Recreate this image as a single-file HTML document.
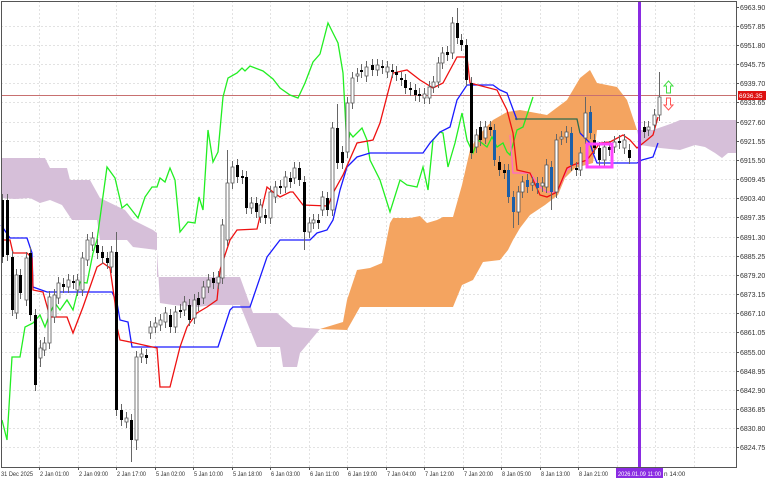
<!DOCTYPE html>
<html><head><meta charset="utf-8"><style>
html,body{margin:0;padding:0;background:#fff;width:768px;height:480px;overflow:hidden}
svg{position:absolute;left:0;top:0}
text{font-family:"Liberation Sans",sans-serif;font-size:7px;fill:#333}
.b text{font-size:6.4px}
</style></head><body>
<svg width="768" height="480" viewBox="0 0 768 480" xmlns="http://www.w3.org/2000/svg">
<g stroke="#e2e2e2" stroke-width="1" stroke-dasharray="2,2" fill="none">
<path d="M39.5 1V467M78.5 1V467M116.5 1V467M155.5 1V467M193.5 1V467M232.5 1V467M270.5 1V467M309.5 1V467M347.5 1V467M386.5 1V467M424.5 1V467M463.5 1V467M501.5 1V467M540.5 1V467M578.5 1V467M617.5 1V467M655.5 1V467M694.5 1V467"/>
<path d="M1 26.5H736M1 45.5H736M1 64.5H736M1 83.5H736M1 102.5H736M1 122.5H736M1 141.5H736M1 160.5H736M1 179.5H736M1 198.5H736M1 217.5H736M1 237.5H736M1 256.5H736M1 275.5H736M1 294.5H736M1 313.5H736M1 332.5H736M1 352.5H736M1 371.5H736M1 390.5H736M1 409.5H736M1 428.5H736M1 447.5H736"/>
</g>
<path fill="#d6bfd9" d="M1 158H45L50 168H67L70 180H90L100 198L125 210L133 220L153 230L157 233L157 277H240L253 313H277L293 327L320 329L300 353L297 367H283L280 347H257L240 305H213L197 307L173 305L160 303L157 250L133 247L127 240H100L97 220H72L62 205L50 200L40 203L30 198L15 199L1 198Z"/>
<path fill="#d6bfd9" d="M637 130L653 130L673 123L680 120H736V153L728 153L722 158L715 153L705 147L695 145L680 150L660 148L640 145Z"/>
<path fill="#f4a460" d="M320 329L343 322L347 300L357 270L370 268L382 263L390 223L393 218L410 218L420 216L427 223L437 220L443 217L453 217L462 185L470 150L477 137L493 120L507 112L520 110L547 115L567 100L580 78L590 70L597 83L617 87L627 100L637 130H597L593 163L575 168L565 178L558 195L545 205L530 215L520 228L513 240L508 250L500 260L483 262L473 280L462 285L453 307H360L347 330Z"/>
<path d="M1 95.5H736" stroke="#c87070" stroke-width="1"/>
<polyline fill="none" stroke="#22ee22" stroke-width="1.3" points="2,420 7,440 12,357 20,357 25,327 33,323 40,315 45,327 50,313 55,303 60,310 67,300 73,310 80,282 87,283 93,253 97,240 107,167 115,178 122,208 127,204 138,218 145,197 152,187 157,187 160,178 165,182 170,168 175,180 180,232 188,222 195,223 199,197 203,210 208,130 213,162 218,152 223,97 228,78 237,73 242,68 245,71 250,66 263,71 273,79 280,88 290,95 298,98 305,83 313,62 320,54 328,23 333,33 338,43 343,73 347,148 350,133 353,137 362,128 367,140 370,160 380,180 390,212 400,180 407,185 417,187 423,167 428,190 433,140 440,132 443,133 448,167 455,143 462,113 467,140 473,153 478,140 487,147 492,137 497,147 503,143 507,152 510,155 517,130 523,127 533,97"/>
<polyline fill="none" stroke="#1a1aff" stroke-width="1.3" points="1,225 10,238 27,238 32,253 33,287 47,292 112,292 117,303 120,320 128,322 132,347 218,347 230,310 233,307 250,307 267,257 280,240 310,240 317,233 327,230 333,220 340,190 347,167 357,157 370,153 423,153 430,143 440,132 450,127 457,100 467,85 493,85 500,90 507,93 517,120"/>
<polyline fill="none" stroke="#2e6b4e" stroke-width="1.3" points="515,119 577,119 580,133"/>
<polyline fill="none" stroke="#1a1aff" stroke-width="1.3" points="580,133 590,143 593,153 597,163 637,163 642,160 653,157 658,143"/>
<polyline fill="none" stroke="#ff66cc" stroke-width="1.3" points="510,135 513,173 530,173 540,187 547,192 557,192 567,170 573,165 583,163"/>
<polyline fill="none" stroke="#ee1111" stroke-width="1.3" points="1,240 10,240 13,253 27,253 32,258 33,290 43,292 50,317 67,317 73,333 83,307 97,267 103,263 110,268 115,303 117,327 120,340 130,342 157,348 160,387 170,387 180,347 187,327 197,313 207,307 217,300 220,270 230,240 237,230 257,229 267,187 273,192 280,197 290,192 293,192 303,205 328,206 333,193 343,175 357,143 373,140 380,123 393,73 407,70 420,80 433,88 443,83 457,57 467,57 470,83 497,90 507,110 513,133 517,170 530,173 540,195 547,197 557,192 567,168 573,165 587,160 600,143 610,142 623,135 630,140 637,148 647,140 653,135 658,117"/>
<path stroke="#666" stroke-width="1" fill="none" d="M2.5 194V263M7.5 194V261M12.5 251V316M16.5 269V319M20.5 269V299M26.5 252V306M30.5 247V321M35.5 309V391M40.5 340V367M44.5 337V356M49.5 291V349M54.5 289V323M58.5 277V304M63.5 278V293M68.5 274V293M73.5 275V289M77.5 274V296M82.5 252V296M87.5 234V266M92.5 232V251M97.5 239V259M102.5 246V264M107.5 252V269M111.5 246V273M116.5 232V416M121.5 404V426M126.5 412V428M131.5 414V462M136.5 351V450M141.5 348V363M146.5 349V364M150.5 321V339M155.5 317V333M160.5 314V331M165.5 307V328M170.5 309V333M175.5 306V333M180.5 304V318M184.5 296V316M189.5 299V326M194.5 294V324M198.5 292V311M203.5 281V304M208.5 274V293M213.5 272V289M218.5 271V289M222.5 219V284M227.5 150V246M232.5 161V189M237.5 159V183M242.5 170V184M246.5 171V214M251.5 197V214M256.5 197V218M260.5 199V223M265.5 209V224M270.5 186V224M275.5 181V203M280.5 180V194M285.5 171V193M290.5 172V188M294.5 162V184M299.5 162V186M304.5 176V250M309.5 217V238M313.5 214V229M318.5 214V229M322.5 191V216M327.5 192V216M332.5 122V216M337.5 104V169M342.5 146V169M347.5 97V158M352.5 72V109M357.5 68V82M361.5 64V78M366.5 61V82M372.5 59V76M377.5 59V76M382.5 60V74M387.5 61V78M392.5 64V78M396.5 66V81M401.5 72V86M405.5 74V94M410.5 82V96M415.5 84V101M419.5 88V102M424.5 88V104M429.5 81V104M433.5 76V93M438.5 57V88M442.5 47V69M447.5 46V61M452.5 17V59M457.5 8V44M461.5 34V51M466.5 39V86M471.5 77V159M476.5 129V153M480.5 121V146M485.5 121V144M490.5 121V136M494.5 124V166M499.5 156V176M504.5 164V179M508.5 164V203M513.5 191V228M518.5 186V225M522.5 176V198M527.5 174V193M532.5 177V191M537.5 177V194M542.5 177V192M546.5 159V193M551.5 161V210M556.5 134V198M561.5 131V145M566.5 126V143M571.5 127V171M576.5 162V176M580.5 147V176M585.5 97V144M590.5 106V139M594.5 134V154M599.5 142V166M604.5 141V166M609.5 141V156M614.5 136V153M619.5 135V149M624.5 134V154M629.5 144V164M644.5 121V138M648.5 121V136M654.5 109V131M659.5 72V121"/>
<path fill="#000" d="M1 200h3V257h-3ZM6 200h3V255h-3ZM11 257h3V310h-3ZM19 275h3V293h-3ZM29 253h3V315h-3ZM34 315h3V385h-3ZM62 284h3V287h-3ZM72 281h3V283h-3ZM96 245h3V253h-3ZM101 252h3V258h-3ZM106 258h3V263h-3ZM115 252h3V410h-3ZM120 410h3V420h-3ZM130 420h3V440h-3ZM145 355h3V358h-3ZM169 315h3V327h-3ZM179 310h3V312h-3ZM188 305h3V320h-3ZM197 298h3V305h-3ZM212 278h3V283h-3ZM236 165h3V177h-3ZM241 176h3V178h-3ZM245 177h3V208h-3ZM255 203h3V212h-3ZM264 215h3V218h-3ZM279 186h3V188h-3ZM289 178h3V182h-3ZM298 168h3V180h-3ZM303 182h3V232h-3ZM317 220h3V223h-3ZM326 198h3V210h-3ZM336 128h3V163h-3ZM341 152h3V163h-3ZM360 70h3V72h-3ZM371 65h3V70h-3ZM381 66h3V68h-3ZM391 70h3V72h-3ZM395 72h3V75h-3ZM400 78h3V80h-3ZM404 80h3V88h-3ZM409 88h3V90h-3ZM414 90h3V95h-3ZM418 94h3V96h-3ZM446 52h3V55h-3ZM456 23h3V38h-3ZM460 40h3V45h-3ZM465 45h3V80h-3ZM470 83h3V153h-3ZM479 127h3V140h-3ZM489 127h3V130h-3ZM498 162h3V170h-3ZM503 170h3V173h-3ZM575 168h3V170h-3ZM593 140h3V148h-3ZM598 148h3V160h-3ZM608 147h3V150h-3ZM618 141h3V143h-3ZM628 150h3V158h-3ZM643 127h3V132h-3Z"/>
<path fill="#1c5fa8" d="M493 130h3V160h-3ZM507 170h3V197h-3ZM512 197h3V212h-3ZM526 180h3V187h-3ZM536 183h3V188h-3ZM550 167h3V192h-3ZM570 133h3V165h-3ZM589 112h3V133h-3Z"/>
<path fill="#fff" stroke="#555" stroke-width="0.8" d="M15 275h3V313h-3ZM25 258h3V300h-3ZM39 348h3V358h-3ZM43 343h3V350h-3ZM48 297h3V343h-3ZM53 295h3V317h-3ZM57 283h3V298h-3ZM67 280h3V287h-3ZM76 280h3V290h-3ZM81 258h3V290h-3ZM86 240h3V260h-3ZM91 238h3V245h-3ZM110 252h3V267h-3ZM125 418h3V422h-3ZM135 357h3V440h-3ZM140 354h3V357h-3ZM149 327h3V333h-3ZM154 323h3V327h-3ZM159 320h3V325h-3ZM164 313h3V322h-3ZM174 312h3V327h-3ZM183 302h3V310h-3ZM193 300h3V318h-3ZM202 287h3V298h-3ZM207 280h3V287h-3ZM217 277h3V283h-3ZM221 225h3V278h-3ZM226 183h3V240h-3ZM231 167h3V183h-3ZM250 203h3V208h-3ZM259 205h3V217h-3ZM269 192h3V218h-3ZM274 187h3V197h-3ZM284 177h3V187h-3ZM293 168h3V178h-3ZM308 223h3V232h-3ZM312 220h3V223h-3ZM321 197h3V210h-3ZM331 128h3V210h-3ZM346 103h3V152h-3ZM351 78h3V103h-3ZM356 74h3V76h-3ZM365 67h3V76h-3ZM376 65h3V70h-3ZM386 67h3V72h-3ZM423 94h3V98h-3ZM428 87h3V98h-3ZM432 82h3V87h-3ZM437 63h3V82h-3ZM441 53h3V63h-3ZM451 23h3V53h-3ZM475 135h3V147h-3ZM484 127h3V138h-3ZM517 192h3V212h-3ZM521 182h3V192h-3ZM531 183h3V185h-3ZM541 183h3V186h-3ZM545 165h3V187h-3ZM555 140h3V192h-3ZM560 137h3V139h-3ZM565 132h3V137h-3ZM579 153h3V170h-3ZM584 113h3V138h-3ZM603 147h3V160h-3ZM613 142h3V147h-3ZM623 140h3V148h-3ZM647 127h3V130h-3ZM653 115h3V125h-3ZM658 97h3V115h-3Z"/>
<rect x="587" y="144" width="25" height="23" fill="none" stroke="#ff44ff" stroke-width="3"/>
<path d="M668.5 81L673 86H670.5V93H666.5V86H664Z" fill="#fff" stroke="#44dd44" stroke-width="1"/>
<path d="M668.5 110L673 105H670.5V98H666.5V105H664Z" fill="#fff" stroke="#ff5555" stroke-width="1"/>
<rect x="638" y="1" width="3" height="466" fill="#8a2be2"/>
<path d="M1.5 1V467.5H736.5V1.5H1" stroke="#555" stroke-width="1" fill="none"/>
<path stroke="#555" d="M736 7.5h3M736 26.5h3M736 45.5h3M736 64.5h3M736 83.5h3M736 102.5h3M736 122.5h3M736 141.5h3M736 160.5h3M736 179.5h3M736 198.5h3M736 217.5h3M736 237.5h3M736 256.5h3M736 275.5h3M736 294.5h3M736 313.5h3M736 332.5h3M736 352.5h3M736 371.5h3M736 390.5h3M736 409.5h3M736 428.5h3M736 447.5h3M39.5 467v3M78.5 467v3M116.5 467v3M155.5 467v3M193.5 467v3M232.5 467v3M270.5 467v3M309.5 467v3M347.5 467v3M386.5 467v3M424.5 467v3M463.5 467v3M501.5 467v3M540.5 467v3M578.5 467v3"/>
<g>
<text x="740" y="10">6963.90</text><text x="740" y="29">6957.85</text><text x="740" y="48">6951.80</text><text x="740" y="67">6945.75</text><text x="740" y="86">6939.70</text><text x="740" y="105">6933.65</text><text x="740" y="125">6927.60</text><text x="740" y="144">6921.55</text><text x="740" y="163">6915.50</text><text x="740" y="182">6909.45</text><text x="740" y="201">6903.40</text><text x="740" y="220">6897.35</text><text x="740" y="240">6891.30</text><text x="740" y="259">6885.25</text><text x="740" y="278">6879.20</text><text x="740" y="297">6873.15</text><text x="740" y="316">6867.10</text><text x="740" y="335">6861.05</text><text x="740" y="355">6855.00</text><text x="740" y="374">6848.95</text><text x="740" y="393">6842.90</text><text x="740" y="412">6836.85</text><text x="740" y="431">6830.80</text><text x="740" y="450">6824.75</text>
</g>
<rect x="738" y="91" width="28" height="9" fill="#dd1111"/>
<text x="739" y="98" style="fill:#fff;font-size:6.5px">6936.35</text>
<g class="b">
<text x="1" y="476" textLength="32" lengthAdjust="spacingAndGlyphs">31 Dec 2025</text><text x="40" y="476" textLength="29" lengthAdjust="spacingAndGlyphs">2 Jan 01:00</text><text x="79" y="476" textLength="29" lengthAdjust="spacingAndGlyphs">2 Jan 09:00</text><text x="117" y="476" textLength="29" lengthAdjust="spacingAndGlyphs">2 Jan 17:00</text><text x="156" y="476" textLength="29" lengthAdjust="spacingAndGlyphs">5 Jan 02:00</text><text x="194" y="476" textLength="29" lengthAdjust="spacingAndGlyphs">5 Jan 10:00</text><text x="233" y="476" textLength="29" lengthAdjust="spacingAndGlyphs">5 Jan 18:00</text><text x="271" y="476" textLength="29" lengthAdjust="spacingAndGlyphs">6 Jan 03:00</text><text x="310" y="476" textLength="29" lengthAdjust="spacingAndGlyphs">6 Jan 11:00</text><text x="348" y="476" textLength="29" lengthAdjust="spacingAndGlyphs">6 Jan 19:00</text><text x="387" y="476" textLength="29" lengthAdjust="spacingAndGlyphs">7 Jan 04:00</text><text x="425" y="476" textLength="29" lengthAdjust="spacingAndGlyphs">7 Jan 12:00</text><text x="464" y="476" textLength="29" lengthAdjust="spacingAndGlyphs">7 Jan 20:00</text><text x="502" y="476" textLength="29" lengthAdjust="spacingAndGlyphs">8 Jan 05:00</text><text x="541" y="476" textLength="29" lengthAdjust="spacingAndGlyphs">8 Jan 13:00</text><text x="579" y="476" textLength="29" lengthAdjust="spacingAndGlyphs">8 Jan 21:00</text>
</g>
<rect x="616" y="468" width="47" height="10" fill="#8a2be2"/>
<text x="618" y="476" style="fill:#fff;font-size:6.4px" textLength="43" lengthAdjust="spacingAndGlyphs">2026.01.09 11:00</text>
<text x="664" y="476" style="font-size:6.4px">n 14:00</text>
</svg>
</body></html>
